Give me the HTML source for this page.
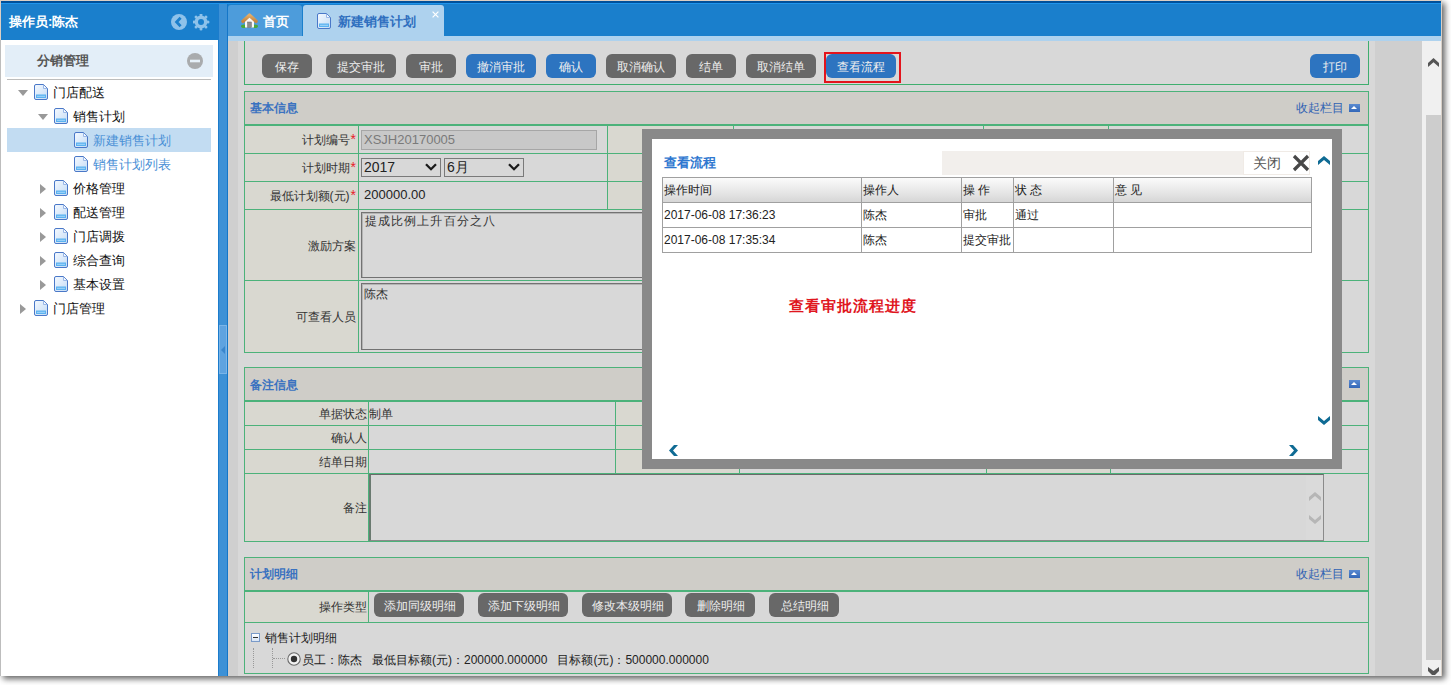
<!DOCTYPE html>
<html><head><meta charset="utf-8">
<style>
*{box-sizing:border-box;margin:0;padding:0}
html,body{width:1451px;height:685px;overflow:hidden;background:#fff;font-family:"Liberation Sans",sans-serif;font-size:12px;color:#222}
.a{position:absolute}
#win{position:absolute;left:0;top:0;width:1442px;height:676px;background:#fff;box-shadow:3px 3px 6px rgba(0,0,0,.6);overflow:hidden}
.btn{position:absolute;height:24px;border-radius:6px;background:#686868;color:#eee;font-size:12px;line-height:25px;text-align:center;padding-top:1px}
.btn.b{background:#2d74c0}
.gl{position:absolute;background:#3fae6e}
.lbl{position:absolute;text-align:right;color:#333;font-size:12px}
.req{color:#e8202a;font-size:14px;padding-left:1px}
.tri{position:absolute;width:0;height:0;border-left:5px solid transparent;border-right:5px solid transparent;border-top:6px solid #999}
.trir{position:absolute;width:0;height:0;border-top:5px solid transparent;border-bottom:5px solid transparent;border-left:6px solid #999}
.ti{position:absolute;font-size:13px;color:#111;white-space:nowrap}
</style></head><body>
<div id="win">
<!-- top line -->
<div class="a" style="left:0;top:0;width:1442px;height:1px;background:#dccfc4"></div>
<div class="a" style="left:0;top:0;width:1px;height:40px;background:#dccfc4"></div>
<div class="a" style="left:0;top:40px;width:1px;height:636px;background:#bdbdbd"></div>
<div class="a" style="left:1px;top:1px;width:1441px;height:2px;background:#00509a"></div>
<div class="a" style="left:1px;top:3px;width:1441px;height:1px;background:#1f95ec"></div>
<div class="a" style="left:1px;top:4px;width:1441px;height:36px;background:#1a7fcc"></div>

<!-- SIDEBAR -->
<div class="a" style="left:9px;top:13px;font-size:13px;font-weight:bold;color:#fff;line-height:18px">操作员:陈杰</div>
<svg class="a" style="left:171px;top:14px" width="17" height="17" viewBox="0 0 17 17"><circle cx="8" cy="8" r="8" fill="#8ec2ea"/><path d="M9.6 3.8 L5.6 8 L9.6 12.2" stroke="#1a7fcc" stroke-width="2.8" fill="none"/></svg>
<svg class="a" style="left:193px;top:14px" width="17" height="17" viewBox="0 0 17 17"><g fill="#8ec2ea"><circle cx="8" cy="8" r="6.4"/><circle cx="15.00" cy="8.00" r="1.5"/><circle cx="12.95" cy="12.95" r="1.5"/><circle cx="8.00" cy="15.00" r="1.5"/><circle cx="3.05" cy="12.95" r="1.5"/><circle cx="1.00" cy="8.00" r="1.5"/><circle cx="3.05" cy="3.05" r="1.5"/><circle cx="8.00" cy="1.00" r="1.5"/><circle cx="12.95" cy="3.05" r="1.5"/></g><circle cx="8" cy="8" r="3" fill="#1a7fcc"/></svg>

<div class="a" style="left:1px;top:40px;width:217px;height:636px;background:#fff"></div>
<div class="a" style="left:5px;top:45px;width:208px;height:32px;background:#e3eef8"></div>
<div class="a" style="left:37px;top:52px;font-size:13px;font-weight:bold;color:#555;line-height:18px">分销管理</div>
<svg class="a" style="left:187px;top:53px" width="16" height="16" viewBox="0 0 16 16"><circle cx="8" cy="8" r="8" fill="#a9abad"/><rect x="3" y="6.7" width="10" height="2.6" fill="#e6f0f8"/></svg>
<div class="a" style="left:7px;top:79px;width:204px;height:1px;background:#bdbdbd"></div>
<div class="a" style="left:7px;top:128px;width:204px;height:24px;background:#c2dcf2"></div>
<div class="tri" style="left:18px;top:90px"></div>
<svg class="a" style="left:34px;top:84px" width="15" height="16" viewBox="0 0 15 16"><defs><linearGradient id="dg" x1="0" y1="0" x2="1" y2="1"><stop offset="0" stop-color="#f4f9ff"/><stop offset="1" stop-color="#c5dcf5"/></linearGradient></defs><path d="M2 0.5 H9.5 L13.5 4.5 V14 Q13.5 15.5 12 15.5 H2 Q0.5 15.5 0.5 14 V2 Q0.5 0.5 2 0.5 Z" fill="url(#dg)" stroke="#4a78c8" stroke-width="1"/><path d="M9.5 1 V4.5 H13" fill="#f4f8fe" stroke="#9ab8e8" stroke-width="1"/><rect x="2" y="10.5" width="10" height="3.5" fill="#5ab2f0"/><rect x="3" y="11.8" width="8" height="1" fill="#a8d8fa"/></svg>
<div class="ti" style="left:53px;top:84px;line-height:18px;color:#111">门店配送</div>
<div class="tri" style="left:38px;top:114px"></div>
<svg class="a" style="left:54px;top:108px" width="15" height="16" viewBox="0 0 15 16"><defs><linearGradient id="dg" x1="0" y1="0" x2="1" y2="1"><stop offset="0" stop-color="#f4f9ff"/><stop offset="1" stop-color="#c5dcf5"/></linearGradient></defs><path d="M2 0.5 H9.5 L13.5 4.5 V14 Q13.5 15.5 12 15.5 H2 Q0.5 15.5 0.5 14 V2 Q0.5 0.5 2 0.5 Z" fill="url(#dg)" stroke="#4a78c8" stroke-width="1"/><path d="M9.5 1 V4.5 H13" fill="#f4f8fe" stroke="#9ab8e8" stroke-width="1"/><rect x="2" y="10.5" width="10" height="3.5" fill="#5ab2f0"/><rect x="3" y="11.8" width="8" height="1" fill="#a8d8fa"/></svg>
<div class="ti" style="left:73px;top:108px;line-height:18px;color:#111">销售计划</div>
<svg class="a" style="left:74px;top:132px" width="15" height="16" viewBox="0 0 15 16"><defs><linearGradient id="dg" x1="0" y1="0" x2="1" y2="1"><stop offset="0" stop-color="#f4f9ff"/><stop offset="1" stop-color="#c5dcf5"/></linearGradient></defs><path d="M2 0.5 H9.5 L13.5 4.5 V14 Q13.5 15.5 12 15.5 H2 Q0.5 15.5 0.5 14 V2 Q0.5 0.5 2 0.5 Z" fill="url(#dg)" stroke="#4a78c8" stroke-width="1"/><path d="M9.5 1 V4.5 H13" fill="#f4f8fe" stroke="#9ab8e8" stroke-width="1"/><rect x="2" y="10.5" width="10" height="3.5" fill="#5ab2f0"/><rect x="3" y="11.8" width="8" height="1" fill="#a8d8fa"/></svg>
<div class="ti" style="left:93px;top:132px;line-height:18px;color:#4a90d6">新建销售计划</div>
<svg class="a" style="left:74px;top:156px" width="15" height="16" viewBox="0 0 15 16"><defs><linearGradient id="dg" x1="0" y1="0" x2="1" y2="1"><stop offset="0" stop-color="#f4f9ff"/><stop offset="1" stop-color="#c5dcf5"/></linearGradient></defs><path d="M2 0.5 H9.5 L13.5 4.5 V14 Q13.5 15.5 12 15.5 H2 Q0.5 15.5 0.5 14 V2 Q0.5 0.5 2 0.5 Z" fill="url(#dg)" stroke="#4a78c8" stroke-width="1"/><path d="M9.5 1 V4.5 H13" fill="#f4f8fe" stroke="#9ab8e8" stroke-width="1"/><rect x="2" y="10.5" width="10" height="3.5" fill="#5ab2f0"/><rect x="3" y="11.8" width="8" height="1" fill="#a8d8fa"/></svg>
<div class="ti" style="left:93px;top:156px;line-height:18px;color:#4a90d6">销售计划列表</div>
<div class="trir" style="left:40px;top:184px"></div>
<svg class="a" style="left:54px;top:180px" width="15" height="16" viewBox="0 0 15 16"><defs><linearGradient id="dg" x1="0" y1="0" x2="1" y2="1"><stop offset="0" stop-color="#f4f9ff"/><stop offset="1" stop-color="#c5dcf5"/></linearGradient></defs><path d="M2 0.5 H9.5 L13.5 4.5 V14 Q13.5 15.5 12 15.5 H2 Q0.5 15.5 0.5 14 V2 Q0.5 0.5 2 0.5 Z" fill="url(#dg)" stroke="#4a78c8" stroke-width="1"/><path d="M9.5 1 V4.5 H13" fill="#f4f8fe" stroke="#9ab8e8" stroke-width="1"/><rect x="2" y="10.5" width="10" height="3.5" fill="#5ab2f0"/><rect x="3" y="11.8" width="8" height="1" fill="#a8d8fa"/></svg>
<div class="ti" style="left:73px;top:180px;line-height:18px;color:#111">价格管理</div>
<div class="trir" style="left:40px;top:208px"></div>
<svg class="a" style="left:54px;top:204px" width="15" height="16" viewBox="0 0 15 16"><defs><linearGradient id="dg" x1="0" y1="0" x2="1" y2="1"><stop offset="0" stop-color="#f4f9ff"/><stop offset="1" stop-color="#c5dcf5"/></linearGradient></defs><path d="M2 0.5 H9.5 L13.5 4.5 V14 Q13.5 15.5 12 15.5 H2 Q0.5 15.5 0.5 14 V2 Q0.5 0.5 2 0.5 Z" fill="url(#dg)" stroke="#4a78c8" stroke-width="1"/><path d="M9.5 1 V4.5 H13" fill="#f4f8fe" stroke="#9ab8e8" stroke-width="1"/><rect x="2" y="10.5" width="10" height="3.5" fill="#5ab2f0"/><rect x="3" y="11.8" width="8" height="1" fill="#a8d8fa"/></svg>
<div class="ti" style="left:73px;top:204px;line-height:18px;color:#111">配送管理</div>
<div class="trir" style="left:40px;top:232px"></div>
<svg class="a" style="left:54px;top:228px" width="15" height="16" viewBox="0 0 15 16"><defs><linearGradient id="dg" x1="0" y1="0" x2="1" y2="1"><stop offset="0" stop-color="#f4f9ff"/><stop offset="1" stop-color="#c5dcf5"/></linearGradient></defs><path d="M2 0.5 H9.5 L13.5 4.5 V14 Q13.5 15.5 12 15.5 H2 Q0.5 15.5 0.5 14 V2 Q0.5 0.5 2 0.5 Z" fill="url(#dg)" stroke="#4a78c8" stroke-width="1"/><path d="M9.5 1 V4.5 H13" fill="#f4f8fe" stroke="#9ab8e8" stroke-width="1"/><rect x="2" y="10.5" width="10" height="3.5" fill="#5ab2f0"/><rect x="3" y="11.8" width="8" height="1" fill="#a8d8fa"/></svg>
<div class="ti" style="left:73px;top:228px;line-height:18px;color:#111">门店调拨</div>
<div class="trir" style="left:40px;top:256px"></div>
<svg class="a" style="left:54px;top:252px" width="15" height="16" viewBox="0 0 15 16"><defs><linearGradient id="dg" x1="0" y1="0" x2="1" y2="1"><stop offset="0" stop-color="#f4f9ff"/><stop offset="1" stop-color="#c5dcf5"/></linearGradient></defs><path d="M2 0.5 H9.5 L13.5 4.5 V14 Q13.5 15.5 12 15.5 H2 Q0.5 15.5 0.5 14 V2 Q0.5 0.5 2 0.5 Z" fill="url(#dg)" stroke="#4a78c8" stroke-width="1"/><path d="M9.5 1 V4.5 H13" fill="#f4f8fe" stroke="#9ab8e8" stroke-width="1"/><rect x="2" y="10.5" width="10" height="3.5" fill="#5ab2f0"/><rect x="3" y="11.8" width="8" height="1" fill="#a8d8fa"/></svg>
<div class="ti" style="left:73px;top:252px;line-height:18px;color:#111">综合查询</div>
<div class="trir" style="left:40px;top:280px"></div>
<svg class="a" style="left:54px;top:276px" width="15" height="16" viewBox="0 0 15 16"><defs><linearGradient id="dg" x1="0" y1="0" x2="1" y2="1"><stop offset="0" stop-color="#f4f9ff"/><stop offset="1" stop-color="#c5dcf5"/></linearGradient></defs><path d="M2 0.5 H9.5 L13.5 4.5 V14 Q13.5 15.5 12 15.5 H2 Q0.5 15.5 0.5 14 V2 Q0.5 0.5 2 0.5 Z" fill="url(#dg)" stroke="#4a78c8" stroke-width="1"/><path d="M9.5 1 V4.5 H13" fill="#f4f8fe" stroke="#9ab8e8" stroke-width="1"/><rect x="2" y="10.5" width="10" height="3.5" fill="#5ab2f0"/><rect x="3" y="11.8" width="8" height="1" fill="#a8d8fa"/></svg>
<div class="ti" style="left:73px;top:276px;line-height:18px;color:#111">基本设置</div>
<div class="trir" style="left:20px;top:304px"></div>
<svg class="a" style="left:34px;top:300px" width="15" height="16" viewBox="0 0 15 16"><defs><linearGradient id="dg" x1="0" y1="0" x2="1" y2="1"><stop offset="0" stop-color="#f4f9ff"/><stop offset="1" stop-color="#c5dcf5"/></linearGradient></defs><path d="M2 0.5 H9.5 L13.5 4.5 V14 Q13.5 15.5 12 15.5 H2 Q0.5 15.5 0.5 14 V2 Q0.5 0.5 2 0.5 Z" fill="url(#dg)" stroke="#4a78c8" stroke-width="1"/><path d="M9.5 1 V4.5 H13" fill="#f4f8fe" stroke="#9ab8e8" stroke-width="1"/><rect x="2" y="10.5" width="10" height="3.5" fill="#5ab2f0"/><rect x="3" y="11.8" width="8" height="1" fill="#a8d8fa"/></svg>
<div class="ti" style="left:53px;top:300px;line-height:18px;color:#111">门店管理</div>
<!-- SPLITTER -->
<div class="a" style="left:218px;top:4px;width:10px;height:672px;background:#3d91d6;border-left:1px solid #1c7ccc;border-right:1px solid #1476c8"></div>
<div class="a" style="left:219px;top:325px;width:8px;height:49px;background:#5ea3e0;border:1px solid #7ab5e8"></div>
<div class="a" style="left:221px;top:346px;width:0;height:0;border-top:4px solid transparent;border-bottom:4px solid transparent;border-right:4px solid #3a86cc"></div>

<!-- TABS -->
<div class="a" style="left:228px;top:5px;width:74px;height:31px;background:#4d9cdb;border-radius:3px 3px 0 0"></div>
<svg class="a" style="left:241px;top:13px" width="17" height="15" viewBox="0 0 17 15"><defs><linearGradient id="rf" x1="0" y1="0" x2="0" y2="1"><stop offset="0" stop-color="#e2ac68"/><stop offset="1" stop-color="#c28440"/></linearGradient></defs><ellipse cx="3" cy="13.2" rx="3" ry="1.8" fill="#4aa83a"/><ellipse cx="14" cy="13.2" rx="3" ry="1.8" fill="#4aa83a"/><path d="M4 8 L8.5 4 L13 8 V14.5 H4 Z" fill="#f8f8f8"/><rect x="6.6" y="9" width="3.8" height="5.5" fill="#8c8c8c" stroke="#666" stroke-width=".5"/><path d="M2 8.3 L8.5 2.2 L15 8.3" fill="none" stroke="url(#rf)" stroke-width="3.6" stroke-linejoin="round" stroke-linecap="round"/></svg>
<div class="a" style="left:263px;top:13px;font-size:13px;font-weight:bold;color:#fff;line-height:18px">首页</div>
<div class="a" style="left:303px;top:5px;width:141px;height:36px;background:#aed2ee;border-radius:3px 3px 0 0"></div>
<svg class="a" style="left:317px;top:13px" width="15" height="16" viewBox="0 0 15 16"><path d="M2 0.5 H9.5 L13.5 4.5 V14 Q13.5 15.5 12 15.5 H2 Q0.5 15.5 0.5 14 V2 Q0.5 0.5 2 0.5 Z" fill="url(#dg)" stroke="#4a78c8" stroke-width="1"/><path d="M9.5 1 V4.5 H13" fill="#f4f8fe" stroke="#9ab8e8" stroke-width="1"/><rect x="2" y="10.5" width="10" height="3.5" fill="#5ab2f0"/><rect x="3" y="11.8" width="8" height="1" fill="#a8d8fa"/></svg>
<div class="a" style="left:338px;top:13px;font-size:13px;font-weight:bold;color:#2f6fbf;line-height:18px">新建销售计划</div>
<svg class="a" style="left:432px;top:11px" width="7" height="7" viewBox="0 0 7 7"><path d="M0.6 0.6 L6.4 6.4 M6.4 0.6 L0.6 6.4" stroke="#fff" stroke-width="1.2"/></svg>
<div class="a" style="left:228px;top:36px;width:1214px;height:5px;background:#aed2ee"></div>

<!-- CONTENT -->
<div class="a" style="left:228px;top:41px;width:1194px;height:635px;background:#cfcfcf"></div>
<div class="a" style="left:238px;top:41px;width:1137px;height:635px;background:#d8d8d8"></div>

<!-- scrollbar -->
<div class="a" style="left:1422px;top:41px;width:19px;height:635px;background:#f0f0f0"></div>
<div class="a" style="left:1426px;top:115px;width:15px;height:545px;background:#cdcdcd"></div>
<svg class="a" style="left:1428px;top:58px" width="11" height="9" viewBox="0 0 11 9"><path d="M0 9 L5.5 4.2 L11 9 L11 5 L5.5 0 L0 5 Z" fill="#555"/></svg>
<svg class="a" style="left:1428px;top:667px" width="11" height="8" viewBox="0 0 11 8"><path d="M0 0 L5.5 4 L11 0 L11 4 L7 8 L4 8 L0 4 Z" fill="#555"/></svg>

<!-- TOOLBAR PANEL -->
<div class="a" style="left:244px;top:41px;width:1125px;height:44px;border:1px solid #3fae6e;border-top:none"></div>
<div class="btn" style="left:262px;top:54px;width:50px">保存</div>
<div class="btn" style="left:326px;top:54px;width:70px">提交审批</div>
<div class="btn" style="left:406px;top:54px;width:50px">审批</div>
<div class="btn b" style="left:466px;top:54px;width:70px">撤消审批</div>
<div class="btn b" style="left:546px;top:54px;width:50px">确认</div>
<div class="btn" style="left:606px;top:54px;width:70px">取消确认</div>
<div class="btn" style="left:686px;top:54px;width:50px">结单</div>
<div class="btn" style="left:746px;top:54px;width:70px">取消结单</div>
<div class="btn b" style="left:826px;top:54px;width:70px">查看流程</div>
<div class="a" style="left:824px;top:52px;width:77px;height:31px;border:2px solid #e3141c"></div>
<div class="btn b" style="left:1310px;top:54px;width:50px">打印</div>

<!--PANELS-->
<div class="a" style="left:244px;top:91px;width:1125px;height:262px;background:#d8d8d8;"></div>
<div class="a" style="left:244px;top:91px;width:1125px;height:33px;background:#cfcdc8;"></div>
<div class="a" style="left:250px;top:100px;white-space:nowrap;line-height:16px;color:#3a72c0;font-weight:bold;font-size:12px">基本信息</div>
<div class="a" style="left:1296px;top:100px;white-space:nowrap;line-height:16px;color:#2f62b3;font-size:12px">收起栏目</div>
<div class="a" style="left:1349px;top:104px;width:11px;height:8px;background:linear-gradient(#5a8ad0,#3468b8)"></div>
<div class="a" style="left:1351px;top:106px;width:0;height:0;border-left:3.5px solid transparent;border-right:3.5px solid transparent;border-bottom:3px solid #fff"></div>
<div class="a" style="left:245px;top:126px;width:113px;height:27px;background:#d9d8d0;"></div>
<div class="a" style="left:608px;top:126px;width:125px;height:27px;background:#d9d8d0;"></div>
<div class="a" style="left:984px;top:126px;width:124px;height:27px;background:#d9d8d0;"></div>
<div class="a" style="left:245px;top:154px;width:113px;height:27px;background:#d9d8d0;"></div>
<div class="a" style="left:608px;top:154px;width:125px;height:27px;background:#d9d8d0;"></div>
<div class="a" style="left:984px;top:154px;width:124px;height:27px;background:#d9d8d0;"></div>
<div class="a" style="left:245px;top:182px;width:113px;height:27px;background:#d9d8d0;"></div>
<div class="a" style="left:608px;top:182px;width:125px;height:27px;background:#d9d8d0;"></div>
<div class="a" style="left:984px;top:182px;width:124px;height:27px;background:#d9d8d0;"></div>
<div class="a" style="left:245px;top:210px;width:113px;height:70px;background:#d9d8d0;"></div>
<div class="a" style="left:245px;top:281px;width:113px;height:71px;background:#d9d8d0;"></div>
<div class="a" style="left:244px;top:91px;width:1125px;height:1px;background:#4cb27a;"></div>
<div class="a" style="left:244px;top:124px;width:1125px;height:2px;background:#4cb27a;"></div>
<div class="a" style="left:244px;top:153px;width:1125px;height:1px;background:#4cb27a;"></div>
<div class="a" style="left:244px;top:181px;width:1125px;height:1px;background:#4cb27a;"></div>
<div class="a" style="left:244px;top:209px;width:1125px;height:1px;background:#4cb27a;"></div>
<div class="a" style="left:244px;top:280px;width:1125px;height:1px;background:#4cb27a;"></div>
<div class="a" style="left:244px;top:352px;width:1125px;height:1px;background:#4cb27a;"></div>
<div class="a" style="left:244px;top:91px;width:1px;height:262px;background:#4cb27a;"></div>
<div class="a" style="left:1368px;top:91px;width:1px;height:262px;background:#4cb27a;"></div>
<div class="a" style="left:358px;top:124px;width:1px;height:85px;background:#4cb27a;"></div>
<div class="a" style="left:607px;top:124px;width:1px;height:85px;background:#4cb27a;"></div>
<div class="a" style="left:733px;top:124px;width:1px;height:85px;background:#4cb27a;"></div>
<div class="a" style="left:983px;top:124px;width:1px;height:85px;background:#4cb27a;"></div>
<div class="a" style="left:1108px;top:124px;width:1px;height:85px;background:#4cb27a;"></div>
<div class="a" style="left:358px;top:209px;width:1px;height:144px;background:#4cb27a;"></div>
<div class="a" style="right:1086px;top:131px;white-space:nowrap;line-height:16px;text-align:right;color:#333">计划编号<span class="req">*</span></div>
<div class="a" style="right:1086px;top:159px;white-space:nowrap;line-height:16px;text-align:right;color:#333">计划时期<span class="req">*</span></div>
<div class="a" style="right:1086px;top:187px;white-space:nowrap;line-height:16px;text-align:right;color:#333">最低计划额(元)<span class="req">*</span></div>
<div class="a" style="right:1086px;top:238px;white-space:nowrap;line-height:16px;text-align:right;color:#333">激励方案</div>
<div class="a" style="right:1086px;top:309px;white-space:nowrap;line-height:16px;text-align:right;color:#333">可查看人员</div>
<div class="a" style="left:361px;top:130px;width:236px;height:20px;background:#c8c8c8;border:1px solid #a6a6a6;color:#7a7a7a;font-size:13px;line-height:18px;padding-left:2px">XSJH20170005</div>
<div class="a" style="left:361px;top:158px;width:80px;height:19px;background:#d8d8d8;border:1px solid #7a7a7a;color:#222;font-size:14px;line-height:17px;padding-left:2px">2017</div>
<svg class="a" style="left:425px;top:163px" width="12" height="8" viewBox="0 0 12 8"><path d="M1 1.2 L6 6.2 L11 1.2" fill="none" stroke="#1a1a1a" stroke-width="2.3"/></svg>
<div class="a" style="left:444px;top:158px;width:80px;height:19px;background:#d8d8d8;border:1px solid #7a7a7a;color:#222;font-size:14px;line-height:17px;padding-left:2px">6月</div>
<svg class="a" style="left:508px;top:163px" width="12" height="8" viewBox="0 0 12 8"><path d="M1 1.2 L6 6.2 L11 1.2" fill="none" stroke="#1a1a1a" stroke-width="2.3"/></svg>
<div class="a" style="left:364px;top:187px;white-space:nowrap;line-height:16px;color:#222;font-size:13px">200000.00</div>
<div class="a" style="left:361px;top:212px;width:962px;height:66px;background:#d8d8d8;border:1px solid #727272;box-shadow:inset 1px 1px 0 #b4b4b4"></div>
<div class="a" style="left:365px;top:213px;white-space:nowrap;line-height:16px;color:#333;font-size:12px;letter-spacing:1.1px">提成比例上升百分之八</div>
<div class="a" style="left:361px;top:283px;width:962px;height:67px;background:#d8d8d8;border:1px solid #727272;box-shadow:inset 1px 1px 0 #b4b4b4"></div>
<div class="a" style="left:364px;top:286px;white-space:nowrap;line-height:16px;color:#333;font-size:12px">陈杰</div>
<div class="a" style="left:244px;top:367px;width:1125px;height:175px;background:#d8d8d8;"></div>
<div class="a" style="left:244px;top:367px;width:1125px;height:33px;background:#cfcdc8;"></div>
<div class="a" style="left:250px;top:377px;white-space:nowrap;line-height:16px;color:#3a72c0;font-weight:bold;font-size:12px">备注信息</div>
<div class="a" style="left:1296px;top:376px;white-space:nowrap;line-height:16px;color:#2f62b3;font-size:12px">收起栏目</div>
<div class="a" style="left:1349px;top:380px;width:11px;height:8px;background:linear-gradient(#5a8ad0,#3468b8)"></div>
<div class="a" style="left:1351px;top:382px;width:0;height:0;border-left:3.5px solid transparent;border-right:3.5px solid transparent;border-bottom:3px solid #fff"></div>
<div class="a" style="left:245px;top:402px;width:123px;height:23px;background:#d9d8d0;"></div>
<div class="a" style="left:616px;top:402px;width:123px;height:23px;background:#d9d8d0;"></div>
<div class="a" style="left:987px;top:402px;width:123px;height:23px;background:#d9d8d0;"></div>
<div class="a" style="left:245px;top:426px;width:123px;height:23px;background:#d9d8d0;"></div>
<div class="a" style="left:616px;top:426px;width:123px;height:23px;background:#d9d8d0;"></div>
<div class="a" style="left:987px;top:426px;width:123px;height:23px;background:#d9d8d0;"></div>
<div class="a" style="left:245px;top:450px;width:123px;height:23px;background:#d9d8d0;"></div>
<div class="a" style="left:616px;top:450px;width:123px;height:23px;background:#d9d8d0;"></div>
<div class="a" style="left:987px;top:450px;width:123px;height:23px;background:#d9d8d0;"></div>
<div class="a" style="left:245px;top:474px;width:123px;height:67px;background:#d9d8d0;"></div>
<div class="a" style="left:244px;top:367px;width:1125px;height:1px;background:#4cb27a;"></div>
<div class="a" style="left:244px;top:400px;width:1125px;height:2px;background:#4cb27a;"></div>
<div class="a" style="left:244px;top:425px;width:1125px;height:1px;background:#4cb27a;"></div>
<div class="a" style="left:244px;top:449px;width:1125px;height:1px;background:#4cb27a;"></div>
<div class="a" style="left:244px;top:473px;width:1125px;height:1px;background:#4cb27a;"></div>
<div class="a" style="left:244px;top:541px;width:1125px;height:1px;background:#4cb27a;"></div>
<div class="a" style="left:244px;top:367px;width:1px;height:175px;background:#4cb27a;"></div>
<div class="a" style="left:1368px;top:367px;width:1px;height:175px;background:#4cb27a;"></div>
<div class="a" style="left:368px;top:400px;width:1px;height:74px;background:#4cb27a;"></div>
<div class="a" style="left:615px;top:400px;width:1px;height:74px;background:#4cb27a;"></div>
<div class="a" style="left:739px;top:400px;width:1px;height:74px;background:#4cb27a;"></div>
<div class="a" style="left:986px;top:400px;width:1px;height:74px;background:#4cb27a;"></div>
<div class="a" style="left:1110px;top:400px;width:1px;height:74px;background:#4cb27a;"></div>
<div class="a" style="left:368px;top:473px;width:1px;height:69px;background:#4cb27a;"></div>
<div class="a" style="right:1075px;top:406px;white-space:nowrap;line-height:16px;text-align:right;color:#333">单据状态</div>
<div class="a" style="right:1075px;top:430px;white-space:nowrap;line-height:16px;text-align:right;color:#333">确认人</div>
<div class="a" style="right:1075px;top:454px;white-space:nowrap;line-height:16px;text-align:right;color:#333">结单日期</div>
<div class="a" style="left:369px;top:406px;white-space:nowrap;line-height:16px;color:#333">制单</div>
<div class="a" style="right:1075px;top:500px;white-space:nowrap;line-height:16px;text-align:right;color:#333">备注</div>
<div class="a" style="left:369px;top:474px;width:955px;height:67px;background:#d8d8d8;border-left:2px solid #6a7a70;border-top:1px solid #6a6a6a;border-right:1px solid #8a8a8a;border-bottom:1px solid #8a8a8a"></div>
<div class="a" style="left:1306px;top:476px;width:17px;height:64px;background:#dadada"></div>
<svg class="a" style="left:1309px;top:492px" width="12" height="9" viewBox="0 0 12 9"><path d="M0 5 L6 0 L12 5 L12 9 L6 4 L0 9 Z" fill="#b6b6b6"/></svg>
<svg class="a" style="left:1309px;top:515px" width="12" height="9" viewBox="0 0 12 9"><path d="M0 0 L6 5 L12 0 L12 4 L6 9 L0 4 Z" fill="#b6b6b6"/></svg>
<div class="a" style="left:244px;top:557px;width:1125px;height:117px;background:#d8d8d8;"></div>
<div class="a" style="left:244px;top:557px;width:1125px;height:33px;background:#cfcdc8;"></div>
<div class="a" style="left:250px;top:566px;white-space:nowrap;line-height:16px;color:#3a72c0;font-weight:bold;font-size:12px">计划明细</div>
<div class="a" style="left:1296px;top:566px;white-space:nowrap;line-height:16px;color:#2f62b3;font-size:12px">收起栏目</div>
<div class="a" style="left:1349px;top:570px;width:11px;height:8px;background:linear-gradient(#5a8ad0,#3468b8)"></div>
<div class="a" style="left:1351px;top:572px;width:0;height:0;border-left:3.5px solid transparent;border-right:3.5px solid transparent;border-bottom:3px solid #fff"></div>
<div class="a" style="left:244px;top:557px;width:1125px;height:1px;background:#4cb27a;"></div>
<div class="a" style="left:244px;top:590px;width:1125px;height:2px;background:#4cb27a;"></div>
<div class="a" style="left:244px;top:622px;width:1125px;height:1px;background:#4cb27a;"></div>
<div class="a" style="left:244px;top:673px;width:1125px;height:1px;background:#4cb27a;"></div>
<div class="a" style="left:244px;top:557px;width:1px;height:117px;background:#4cb27a;"></div>
<div class="a" style="left:1368px;top:557px;width:1px;height:117px;background:#4cb27a;"></div>
<div class="a" style="left:245px;top:592px;width:123px;height:30px;background:#d9d8d0;"></div>
<div class="a" style="left:368px;top:590px;width:1px;height:33px;background:#4cb27a;"></div>
<div class="a" style="right:1075px;top:599px;white-space:nowrap;line-height:16px;text-align:right;color:#333">操作类型</div>
<div class="btn" style="left:374px;top:593px;width:90px;height:24px;line-height:24px;border-radius:6px;padding-left:2px">添加同级明细</div>
<div class="btn" style="left:478px;top:593px;width:90px;height:24px;line-height:24px;border-radius:6px;padding-left:2px">添加下级明细</div>
<div class="btn" style="left:582px;top:593px;width:90px;height:24px;line-height:24px;border-radius:6px;padding-left:2px">修改本级明细</div>
<div class="btn" style="left:685px;top:593px;width:70px;height:24px;line-height:24px;border-radius:6px;padding-left:2px">删除明细</div>
<div class="btn" style="left:769px;top:593px;width:70px;height:24px;line-height:24px;border-radius:6px;padding-left:2px">总结明细</div>
<div class="a" style="left:251px;top:633px;width:9px;height:9px;border:1px solid #7a9ac8;background:linear-gradient(#fff,#d8e4f4)"></div>
<div class="a" style="left:253px;top:637px;width:5px;height:1px;background:#333"></div>
<div class="a" style="left:265px;top:630px;white-space:nowrap;line-height:16px;color:#222;font-size:12px">销售计划明细</div>
<div class="a" style="left:253px;top:648px;width:0;height:20px;border-left:1px dotted #999"></div>
<div class="a" style="left:272px;top:648px;width:0;height:20px;border-left:1px dotted #999"></div>
<div class="a" style="left:273px;top:658px;width:12px;height:0;border-top:1px dotted #999"></div>
<svg class="a" style="left:287px;top:652px" width="14" height="14" viewBox="0 0 14 14"><circle cx="7" cy="7" r="6.2" fill="#f2f2f2" stroke="#6a6a6a" stroke-width="1.1"/><circle cx="7" cy="7" r="3.2" fill="#333"/></svg>
<div class="a" style="left:302px;top:652px;white-space:nowrap;line-height:16px;color:#222;font-size:12px">员工：陈杰&nbsp;&nbsp; 最低目标额(元)：200000.000000&nbsp;&nbsp; 目标额(元)：500000.000000</div>
<!--/PANELS-->
<!--MODAL-->
<div class="a" style="left:642px;top:129px;width:700px;height:340px;background:#898989"></div>
<div class="a" style="left:652px;top:139px;width:680px;height:320px;background:#fff"></div>
<div class="a" style="left:664px;top:155px;font-size:13px;font-weight:bold;color:#2f78d0;line-height:16px">查看流程</div>
<div class="a" style="left:942px;top:151px;width:368px;height:24px;background:#f2efec"></div>
<div class="a" style="left:1243px;top:151px;width:67px;height:24px;background:#fff;border:1px solid #f0ebe6"></div>
<div class="a" style="left:1253px;top:154px;font-size:14px;color:#555;line-height:18px">关闭</div>
<svg class="a" style="left:1292px;top:154px" width="18" height="18" viewBox="0 0 18 18"><path d="M2 2 L16 16 M16 2 L2 16" stroke="#474747" stroke-width="3.2"/></svg>
<svg class="a" style="left:1318px;top:156px" width="12" height="9" viewBox="0 0 12 9"><path d="M0 9 L6 4 L12 9 L12 5 L6 0 L0 5 Z" fill="#0f6b94"/></svg>
<div class="a" style="left:662px;top:177px;width:650px;height:76px;border:1px solid #a0a0a0;background:#fff"></div>
<div class="a" style="left:663px;top:178px;width:648px;height:24px;background:linear-gradient(#fbfbfb,#e6e6e6 60%,#d6d6d6)"></div>
<div class="a" style="left:662px;top:202px;width:650px;height:1px;background:#a0a0a0"></div>
<div class="a" style="left:662px;top:227px;width:650px;height:1px;background:#a0a0a0"></div>
<div class="a" style="left:861px;top:177px;width:1px;height:76px;background:#a0a0a0"></div>
<div class="a" style="left:961px;top:177px;width:1px;height:76px;background:#a0a0a0"></div>
<div class="a" style="left:1013px;top:177px;width:1px;height:76px;background:#a0a0a0"></div>
<div class="a" style="left:1113px;top:177px;width:1px;height:76px;background:#a0a0a0"></div>
<div class="a" style="left:664px;top:182px;font-size:12px;color:#222;line-height:16px;white-space:nowrap;">操作时间</div>
<div class="a" style="left:863px;top:182px;font-size:12px;color:#222;line-height:16px;white-space:nowrap;">操作人</div>
<div class="a" style="left:963px;top:182px;font-size:12px;color:#222;line-height:16px;white-space:nowrap;">操 作</div>
<div class="a" style="left:1015px;top:182px;font-size:12px;color:#222;line-height:16px;white-space:nowrap;">状 态</div>
<div class="a" style="left:1115px;top:182px;font-size:12px;color:#222;line-height:16px;white-space:nowrap;">意 见</div>
<div class="a" style="left:664px;top:207px;font-size:12px;color:#222;line-height:16px;white-space:nowrap;">2017-06-08 17:36:23</div>
<div class="a" style="left:863px;top:207px;font-size:12px;color:#222;line-height:16px;white-space:nowrap;">陈杰</div>
<div class="a" style="left:963px;top:207px;font-size:12px;color:#222;line-height:16px;white-space:nowrap;">审批</div>
<div class="a" style="left:1015px;top:207px;font-size:12px;color:#222;line-height:16px;white-space:nowrap;">通过</div>
<div class="a" style="left:664px;top:232px;font-size:12px;color:#222;line-height:16px;white-space:nowrap;">2017-06-08 17:35:34</div>
<div class="a" style="left:863px;top:232px;font-size:12px;color:#222;line-height:16px;white-space:nowrap;">陈杰</div>
<div class="a" style="left:963px;top:232px;font-size:12px;color:#222;line-height:16px;white-space:nowrap;">提交审批</div>
<div class="a" style="left:789px;top:297px;font-size:15px;font-weight:bold;color:#e0161e;line-height:18px;letter-spacing:1px">查看审批流程进度</div>
<svg class="a" style="left:1318px;top:416px" width="12" height="9" viewBox="0 0 12 9"><path d="M0 0 L6 5 L12 0 L12 4 L6 9 L0 4 Z" fill="#0f6b94"/></svg>
<svg class="a" style="left:669px;top:445px" width="9" height="11" viewBox="0 0 9 11"><path d="M9 0 L5 0 L0 5.5 L5 11 L9 11 L4 5.5 Z" fill="#0f6b94"/></svg>
<svg class="a" style="left:1289px;top:445px" width="9" height="11" viewBox="0 0 9 11"><path d="M0 0 L4 0 L9 5.5 L4 11 L0 11 L5 5.5 Z" fill="#0f6b94"/></svg>
<!--/MODAL-->
<div class="a" style="left:1441px;top:0;width:1px;height:676px;background:#d8cfc6"></div>
</div>
</body></html>
